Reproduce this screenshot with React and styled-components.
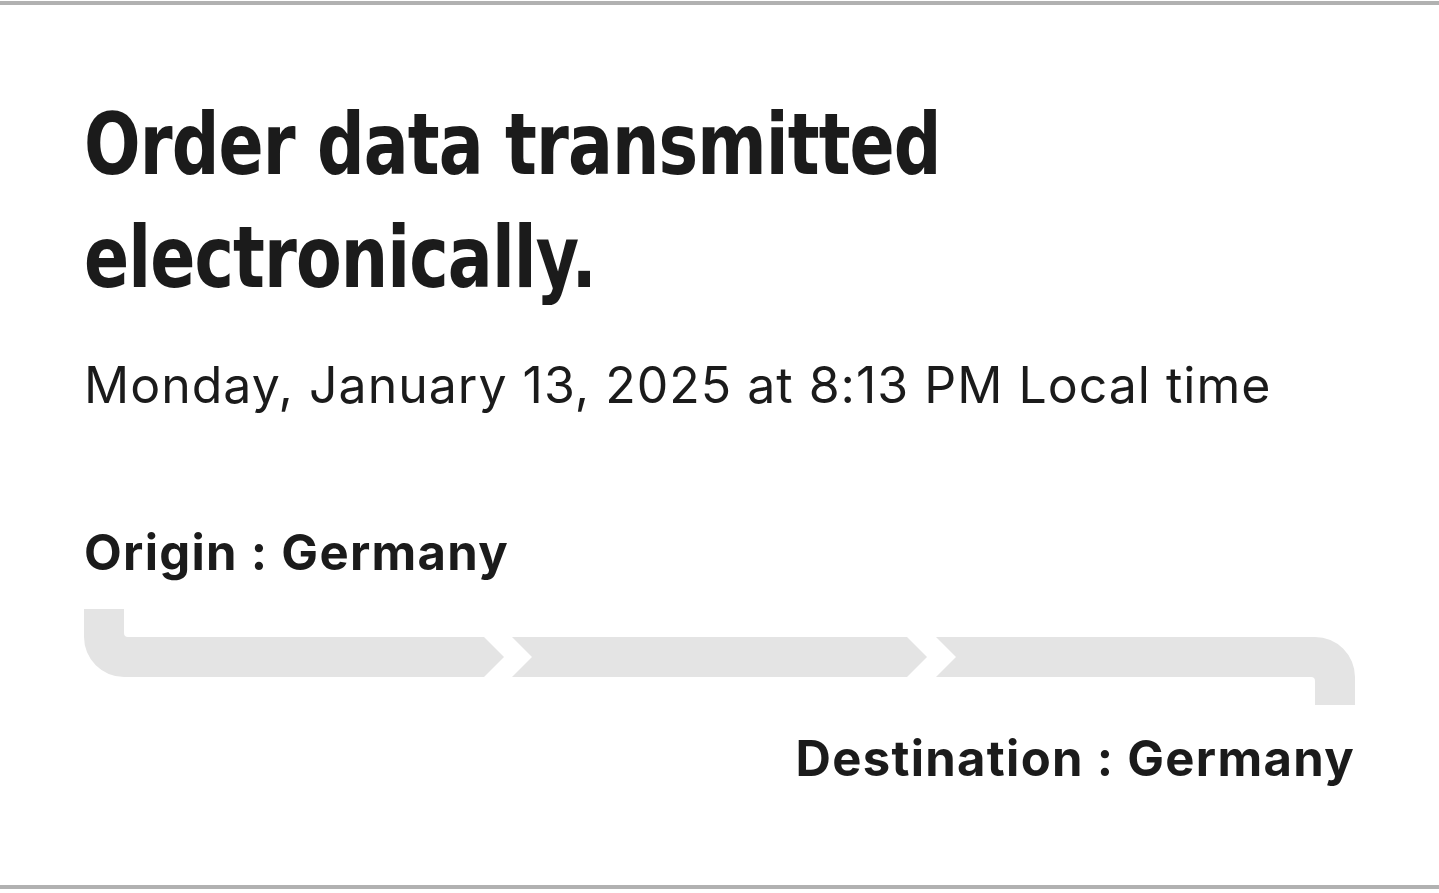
import React from "react";
import styled, { createGlobalStyle } from "styled-components";

const GlobalStyle = createGlobalStyle`
  html, body {
    margin: 0;
    padding: 0;
    background: #ffffff;
  }
  body {
    font-family: Inter, Roboto, "Liberation Sans", sans-serif;
    font-feature-settings: "calt" 0;
    color: #1b1b1b;
  }
`;

const Frame = styled.div`
  margin-top: 1px;
  height: 880px;
  border-top: 4px solid #b1b1b1;
  border-bottom: 4px solid #b1b1b1;
  display: flex;
  flex-direction: column;
  padding: 0 84px;
`;

const Title = styled.h1`
  margin: 83px 0 0;
  font-family: "DejaVu Sans Condensed", "DejaVu Sans", sans-serif;
  font-stretch: condensed;
  font-weight: 700;
  font-size: 86px;
  line-height: 113px;
  letter-spacing: -1px;
  color: #1b1b1b;
  transform: scaleX(0.86);
  transform-origin: left center;
`;

const DateLine = styled.p`
  margin: 39px 0 0;
  font-size: 50px;
  line-height: 64px;
  font-weight: 400;
  letter-spacing: 1px;
`;

const Place = styled.div`
  font-size: 49px;
  line-height: 60px;
  font-weight: 700;
  letter-spacing: 1.3px;
  text-align: ${(p) => (p.$end ? "right" : "left")};
  margin-top: ${(p) => p.$gap}px;
`;

const Track = styled.svg`
  display: block;
  width: 1271px;
  height: 96px;
  margin-top: 26px;
  flex: none;
`;

const ShipmentTrack = () => (
  <Track viewBox="0 0 1271 96">
    <g fill="#e4e4e4">
      <path d="M0 0 H40 V24 Q40 28 44 28 H400 L420 48 L400 68 H40 A40 40 0 0 1 0 28 Z" />
      <path d="M428 28 H823 L843 48 L823 68 H428 L448 48 Z" />
      <path d="M852 28 H1231 A40 40 0 0 1 1271 68 V96 H1231 V72 Q1231 68 1227 68 H852 L872 48 Z" />
    </g>
  </Track>
);

export default function App() {
  return (
    <>
      <GlobalStyle />
      <Frame>
        <Title>Order data transmitted electronically.</Title>
        <DateLine>Monday, January 13, 2025 at 8:13 PM Local time</DateLine>
        <Place $gap={106}>Origin : Germany</Place>
        <ShipmentTrack />
        <Place $end $gap={24}>Destination : Germany</Place>
      </Frame>
    </>
  );
}
